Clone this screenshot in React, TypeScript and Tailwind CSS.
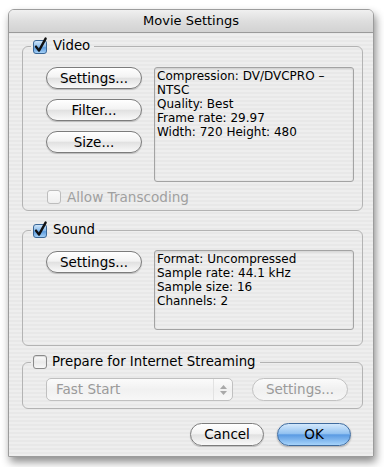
import React from 'react';

const font = "font-['DejaVu_Sans',sans-serif]";

const CheckBox: React.FC<{ checked?: boolean; disabled?: boolean }> = ({ checked, disabled }) => {
    if (checked) {
        return (
            <svg width="15" height="16" viewBox="0 0 15 16" className="shrink-0 overflow-visible">
                <defs>
                    <linearGradient id="cbBlue" x1="0" y1="0" x2="0" y2="1">
                        <stop offset="0" stopColor="#d5e9fb" />
                        <stop offset="0.45" stopColor="#8cbdec" />
                        <stop offset="0.55" stopColor="#5f9ddf" />
                        <stop offset="1" stopColor="#a9d4f8" />
                    </linearGradient>
                </defs>
                <rect x="0.5" y="2.5" width="13" height="13" rx="2.5" fill="url(#cbBlue)" stroke="#3b6796" />
                <path d="M3 8.6 L6 12.6 L12.6 0.6" fill="none" stroke="#111" strokeWidth="2.4" strokeLinecap="round" strokeLinejoin="round" />
            </svg>
        );
    }
    return (
        <div
            className={`w-[14px] h-[14px] shrink-0 rounded-[3px] border ${disabled ? 'border-[#bdbdbd] bg-[linear-gradient(#fafafa,#efefef)]' : 'border-[#8a8a8a] bg-[linear-gradient(#ffffff,#e9e9e9_50%,#f7f7f7)] shadow-[inset_0_1px_1px_rgba(0,0,0,0.15)]'}`}
        />
    );
};

const AquaButton: React.FC<{ label: string; className?: string; disabled?: boolean }> = ({ label, className = '', disabled }) => (
    <div
        className={`flex items-center justify-center rounded-full border text-[13.5px] ${disabled ? 'border-[#c2c2c2] text-[#9a9a9a] bg-[linear-gradient(#fbfbfb,#f0f0f0_50%,#f6f6f6)]' : 'border-[#7c7c7c] text-black bg-[linear-gradient(#ffffff,#f3f3f3_45%,#e1e1e1_52%,#f9f9f9)] shadow-[0_1px_1px_rgba(0,0,0,0.2)]'} ${className}`}
    >
        {label}
    </div>
);

// legend sits after the fieldset padding, so pull it back toward the corner
const Legend: React.FC<{ label: string; checked?: boolean }> = ({ label, checked }) => (
    <legend className="-ml-[15px] px-[2px]">
        <div className="flex items-center gap-[5px] h-[16px] text-[13.3px] text-black leading-[16px]">
            <CheckBox checked={checked} />
            <span className="pr-[2px]">{label}</span>
        </div>
    </legend>
);

const InfoBox: React.FC<{ lines: string[]; height: string }> = ({ lines, height }) => (
    <div className={`w-[200px] ${height} rounded-[3px] border border-[#a3a3a3] shadow-[inset_0_1px_2px_rgba(0,0,0,0.12)] pl-[2px] pr-[6px] pt-[1px] text-[12px] leading-[14px] text-black`}>
        {lines.map((l) => (
            <div key={l}>{l}</div>
        ))}
    </div>
);

const App: React.FC = () => {
    return (
        <div className={`w-[384px] h-[467px] bg-white pt-[9px] pl-[8px] ${font}`}>
            <div className="w-[366px] h-[448px] rounded-t-[6px] border border-[#9c9c9c] shadow-[2px_5px_8px_rgba(0,0,0,0.45)] overflow-hidden flex flex-col bg-[repeating-linear-gradient(180deg,#eeeeee_0px,#eeeeee_2px,#e8e8e8_2px,#e8e8e8_4px)]">
                {/* Title bar */}
                <div className="h-[23px] shrink-0 flex items-center justify-center border-b border-[#9a9a9a] bg-[linear-gradient(#f0f0f0,#dedede_50%,#d2d2d2)] text-[13px] text-black">
                    Movie Settings
                </div>

                <div className="flex flex-col pl-[13px] pt-[5px]">
                    {/* Video */}
                    <fieldset className="w-[341px] rounded-[6px] border border-[#b3b3b3] pl-[23px] pt-[13px] pb-[5px]">
                        <Legend label="Video" checked />
                        <div className="flex gap-[12px]">
                            <div className="flex flex-col gap-[10px]">
                                <AquaButton label="Settings..." className="w-[96px] h-[22px]" />
                                <AquaButton label="Filter..." className="w-[96px] h-[22px]" />
                                <AquaButton label="Size..." className="w-[96px] h-[22px]" />
                            </div>
                            <InfoBox
                                height="h-[115px]"
                                lines={['Compression: DV/DVCPRO –', 'NTSC', 'Quality: Best', 'Frame rate: 29.97', 'Width: 720 Height: 480']}
                            />
                        </div>
                        <div className="flex items-center gap-[6px] h-[16px] mt-[7px] pl-[1px] text-[13.6px] text-[#a0a0a0]">
                            <CheckBox disabled />
                            <span>Allow Transcoding</span>
                        </div>
                    </fieldset>

                    {/* Sound */}
                    <fieldset className="w-[341px] mt-[11px] rounded-[6px] border border-[#b3b3b3] pl-[23px] pt-[12px] pb-[15px]">
                        <Legend label="Sound" checked />
                        <div className="flex items-start gap-[12px]">
                            <AquaButton label="Settings..." className="w-[96px] h-[22px] mt-[1px]" />
                            <InfoBox
                                height="h-[80px]"
                                lines={['Format: Uncompressed', 'Sample rate: 44.1 kHz', 'Sample size: 16', 'Channels: 2']}
                            />
                        </div>
                    </fieldset>

                    {/* Streaming */}
                    <fieldset className="w-[341px] mt-[8px] rounded-[6px] border border-[#b3b3b3] pl-[23px] pt-[8px] pb-[7px]">
                        <Legend label="Prepare for Internet Streaming" />
                        <div className="flex items-center gap-[19px]">
                            <div className="w-[187px] h-[23px] flex rounded-[5px] border border-[#c0c0c0] bg-[linear-gradient(#fbfbfb,#f1f1f1_50%,#f7f7f7)] text-[13.5px] text-[#9a9a9a]">
                                <div className="flex-1 flex items-center pl-[9px]">Fast Start</div>
                                <div className="w-[19px] border-l border-[#e2e2e2] flex flex-col items-center justify-center gap-[2px]">
                                    <svg width="7" height="4" viewBox="0 0 7 4"><path d="M0 4 L3.5 0 L7 4 Z" fill="#a8a8a8" /></svg>
                                    <svg width="7" height="4" viewBox="0 0 7 4"><path d="M0 0 L3.5 4 L7 0 Z" fill="#a8a8a8" /></svg>
                                </div>
                            </div>
                            <AquaButton label="Settings..." disabled className="w-[96px] h-[23px]" />
                        </div>
                    </fieldset>

                    {/* Dialog buttons */}
                    <div className="flex justify-end gap-[13px] pr-[22px] mt-[14px]">
                        <AquaButton label="Cancel" className="w-[74px] h-[23px]" />
                        <div className="w-[74px] h-[23px] flex items-center justify-center rounded-full border border-[#3f6b9e] text-[13.5px] text-black bg-[linear-gradient(#d3e8fc,#94c3f1_45%,#5b9be3_52%,#a6d3fa)] shadow-[0_1px_2px_rgba(0,0,0,0.3)]">
                            OK
                        </div>
                    </div>
                </div>
            </div>
        </div>
    );
};

export default App;
